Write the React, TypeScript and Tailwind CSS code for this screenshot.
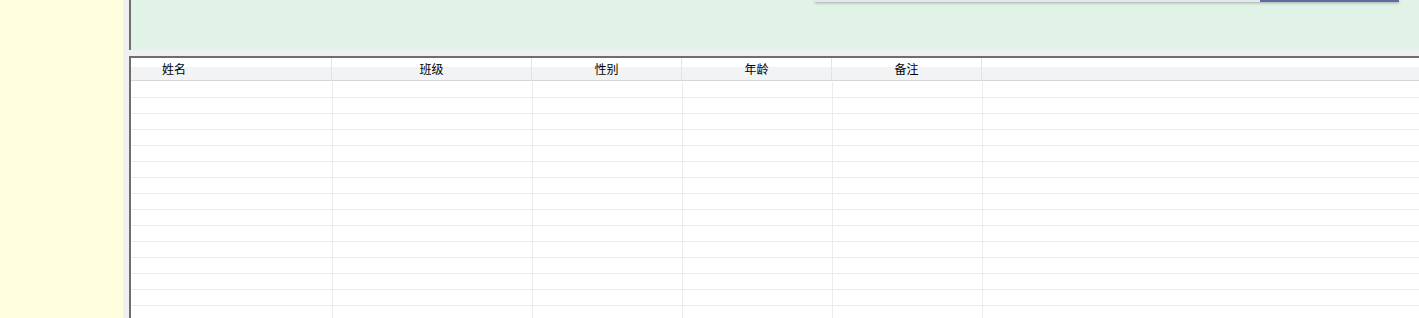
import React from "react";

const headers = [
  { label: "姓名", w: "w-[201px]", align: "justify-start pl-[31px]" },
  { label: "班级", w: "w-[200px]", align: "justify-center" },
  { label: "性别", w: "w-[150px]", align: "justify-center" },
  { label: "年龄", w: "w-[150px]", align: "justify-center" },
  { label: "备注", w: "w-[150px]", align: "justify-center" },
];

const bodyCols = ["w-[202px]", "w-[200px]", "w-[150px]", "w-[150px]", "w-[150px]"];

export default function App() {
  const rows = Array.from({ length: 16 });
  return (
    <div
      className="flex h-[318px] w-[1419px] overflow-hidden bg-[#f0f0f0]"
      style={{ fontFamily: '"Noto Sans CJK SC", "Noto Sans", sans-serif' }}
    >
      <aside className="w-[123px] shrink-0 bg-[#ffffe0]" />
      <div className="ml-[6px] flex flex-1 flex-col gap-[6px]">
        <div className="relative h-[50px] shrink-0 border-l-2 border-[#6e6e6e] bg-[#e1f2e6]">
          <div className="absolute left-[684px] top-0 flex h-[2px] w-[584px] shadow-[0_1px_3px_rgba(0,0,0,0.35)]">
            <div className="flex-1 bg-[#e4e7ef]" />
            <div className="w-[139px] bg-[#5d6ba6]" />
          </div>
        </div>
        <div className="flex flex-1 flex-col overflow-hidden border-l-2 border-t-2 border-[#6e6e6e] bg-white">
          <div className="flex h-[23px] shrink-0 border-b border-[#d5d5d5] bg-[linear-gradient(to_bottom,#ffffff_0%,#ffffff_40%,#f2f3f5_41%,#f2f3f5_100%)]">
            {headers.map((h) => (
              <div
                key={h.label}
                className={`${h.w} flex shrink-0 items-center ${h.align} border-r border-[#e2e3e5] text-[12px] leading-none text-black`}
              >
                {h.label}
              </div>
            ))}
            <div className="flex-1" />
          </div>
          <div className="flex flex-col pt-px">
            {rows.map((_, i) => (
              <div key={i} className="flex h-[16px] shrink-0 border-b border-[#ececec]">
                {bodyCols.map((w, j) => (
                  <div key={j} className={`${w} shrink-0 border-r border-[#ececec]`} />
                ))}
                <div className="flex-1" />
              </div>
            ))}
          </div>
        </div>
      </div>
    </div>
  );
}
